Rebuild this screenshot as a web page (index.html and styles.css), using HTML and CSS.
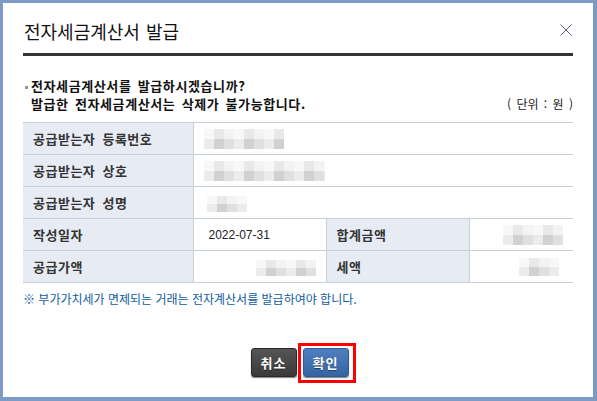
FILE: index.html
```html
<!DOCTYPE html>
<html lang="ko">
<head>
  <meta charset="UTF-8" />
  <meta name="viewport" content="width=device-width, initial-scale=1.0"/>
  <title>전자세금계산서 발급</title>
  <link rel="stylesheet" href="styles.css">
</head>
<body>

  <div class="dialog">
    <header class="dialog-head">
      <h1>전자세금계산서 발급</h1>
      <button type="button" class="close" aria-label="닫기">
        <svg width="12" height="12" viewBox="0 0 12 12">
          <path d="M0.5 0.5 L11.5 11.5 M11.5 0.5 L0.5 11.5" stroke="#5a6480" stroke-width="1" fill="none"/>
        </svg>
      </button>
    </header>

    <div class="message">
      <p class="ask">전자세금계산서를 발급하시겠습니까?</p>
      <div class="warn-row">
        <p>발급한 전자세금계산서는 삭제가 불가능합니다.</p>
        <span class="unit">( 단위 : 원 )</span>
      </div>
    </div>

    <table class="info">
      <colgroup>
        <col class="c-label">
        <col class="c-val">
        <col class="c-label2">
        <col>
      </colgroup>
      <tr>
        <th>공급받는자 등록번호</th>
        <td colspan="3"><span class="blur b-reg"></span></td>
      </tr>
      <tr>
        <th>공급받는자 상호</th>
        <td colspan="3"><span class="blur b-name"></span></td>
      </tr>
      <tr>
        <th>공급받는자 성명</th>
        <td colspan="3" class="pad-more"><span class="blur b-person"></span></td>
      </tr>
      <tr>
        <th>작성일자</th>
        <td class="date">2022-07-31</td>
        <th>합계금액</th>
        <td class="num"><span class="blur b-total"></span></td>
      </tr>
      <tr>
        <th>공급가액</th>
        <td class="num"><span class="blur b-supply"></span></td>
        <th>세액</th>
        <td class="num tax"><span class="blur b-tax"></span></td>
      </tr>
    </table>

    <p class="note">※ 부가가치세가 면제되는 거래는 전자계산서를 발급하여야 합니다.</p>

    <div class="actions">
      <button type="button" class="btn cancel">취소</button>
      <span class="focus-mark">
        <button type="button" class="btn ok">확인</button>
      </span>
    </div>
  </div>

</body>
</html>
```

FILE: styles.css
```css
body {
  margin: 0;
  background-color: #7b9bc6;
  font-family: 'Noto Sans CJK KR', 'Noto Sans', sans-serif;
  color: #222;
}

.dialog {
  margin: 3px 4px 4px 3px;
  height: 394px;
  background: #fff;
  padding: 0 20px;
  box-sizing: border-box;
}

.dialog-head {
  display: flex;
  align-items: center;
  justify-content: space-between;
  padding: 16px 0 9px;
  border-bottom: 3px solid #333;
}

.dialog-head h1 {
  margin: 0 0 0 1px;
  font-size: 18px;
  font-weight: normal;
  line-height: 25px;
  color: #111;
  word-spacing: 1px;
}

.close {
  border: none;
  background: none;
  padding: 0;
  margin-right: 1px;
  margin-top: -3px;
  width: 12px;
  height: 12px;
  display: flex;
  cursor: pointer;
}

.message {
  margin-top: 21px;
  padding-left: 8px;
  font-size: 13px;
  font-weight: bold;
  line-height: 18px;
  color: #111;
  letter-spacing: 0.6px;
  word-spacing: 2px;
}

.message p {
  margin: 0;
}

.ask::before {
  content: "";
  display: inline-block;
  width: 3px;
  height: 3px;
  background: #999;
  margin-left: -6px;
  margin-right: 3px;
  vertical-align: middle;
}

.warn-row {
  display: flex;
  justify-content: space-between;
  align-items: center;
}

.unit {
  font-size: 12px;
  font-weight: normal;
  color: #222;
  letter-spacing: 0;
  word-spacing: 2px;
}

.info {
  width: 100%;
  margin-top: 9px;
  border-collapse: collapse;
  border-top: 1px solid #c3cad5;
  border-bottom: 1px solid #c3cad5;
}

.c-label { width: 170px; }
.c-val { width: 133px; }
.c-label2 { width: 143px; }

.info th,
.info td {
  height: 32px;
  padding: 0 10px;
  border: 1px solid #c9d0da;
  box-sizing: border-box;
}

.info tr th:first-child {
  border-left: none;
}

.info tr td:last-child {
  border-right: none;
}

.info th {
  background: #e6ebf4;
  text-align: left;
  font-size: 13px;
  font-weight: bold;
  color: #333;
  letter-spacing: 0.5px;
  word-spacing: 3px;
}

.info td {
  font-size: 12px;
}

.info td.pad-more {
  padding-left: 13px;
}

.info td.date {
  padding-left: 15px;
  font-family: 'Liberation Sans', Arial, sans-serif;
  color: #222;
}

.info td.num {
  text-align: right;
}

.info td.tax {
  padding-right: 14px;
}

.blur {
  display: inline-block;
  vertical-align: middle;
  background:
    repeating-linear-gradient(90deg, rgba(255,255,255,0.5) 0 10px, rgba(0,0,0,0.03) 10px 20px, rgba(255,255,255,0.2) 20px 30px),
    linear-gradient(#f0f0f0 50%, #d8d8d8 50%);
}

.b-reg { width: 80px; height: 20px; }
.b-name { width: 121px; height: 20px; }
.b-person { width: 40px; height: 16px; }
.b-total { width: 60px; height: 20px; }
.b-supply { width: 60px; height: 16px; }
.b-tax { width: 40px; height: 18px; }

.note {
  margin: 8px 0 0;
  font-size: 12px;
  line-height: 16px;
  color: #0d5c9e;
}

.actions {
  display: flex;
  justify-content: center;
  align-items: flex-start;
  gap: 1px;
  margin-top: 36px;
  padding-left: 10px;
}

.btn {
  width: 46px;
  height: 29px;
  border: 1px solid #2a2a2a;
  border-radius: 3px;
  color: #fff;
  font-family: 'Noto Sans CJK KR', sans-serif;
  font-size: 13px;
  font-weight: bold;
  letter-spacing: 1px;
  cursor: pointer;
  box-shadow: 0 1px 1px rgba(0, 0, 0, 0.5);
  text-shadow: 0 1px 0 rgba(0, 0, 0, 0.4);
}

.cancel {
  margin-top: 5px;
  background: linear-gradient(#555, #3a3a3a);
}

.focus-mark {
  display: flex;
  padding: 2px 4px 3px 2px;
  border: 3px solid #f00;
}

.ok {
  border-color: #2f5a94;
  background: linear-gradient(#4f7fbf, #3564a4);
}
```
